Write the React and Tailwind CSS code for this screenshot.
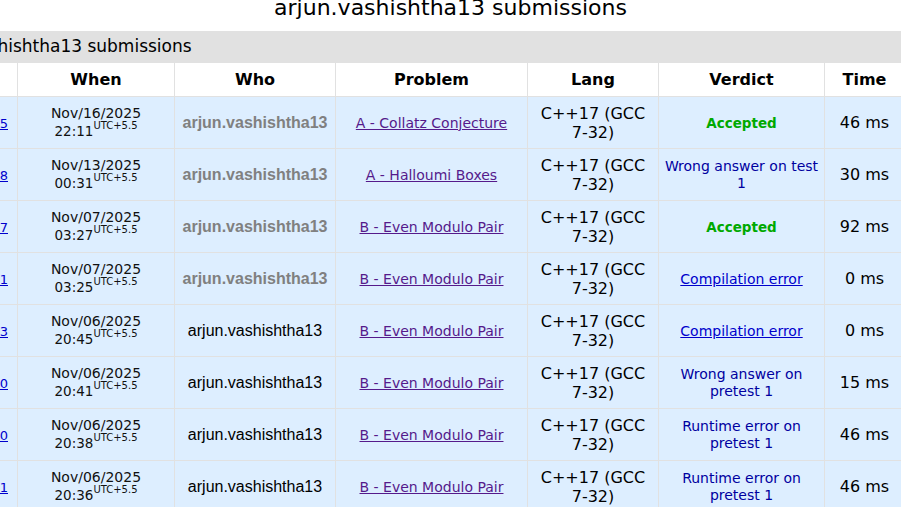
import React from 'react';

const rows = [
  { id: '349812045', date: 'Nov/16/2025', time: '22:11', rated: true, problem: 'A - Collatz Conjecture', verdict: 'ok', vtext: 'Accepted', ms: '46 ms', mem: '100 KB' },
  { id: '349203118', date: 'Nov/13/2025', time: '00:31', rated: true, problem: 'A - Halloumi Boxes', verdict: 'wa', vtext: 'Wrong answer on test 1', ms: '30 ms', mem: '0 KB' },
  { id: '348112507', date: 'Nov/07/2025', time: '03:27', rated: true, problem: 'B - Even Modulo Pair', verdict: 'ok', vtext: 'Accepted', ms: '92 ms', mem: '1100 KB' },
  { id: '348112261', date: 'Nov/07/2025', time: '03:25', rated: true, problem: 'B - Even Modulo Pair', verdict: 'ce', vtext: 'Compilation error', ms: '0 ms', mem: '0 KB' },
  { id: '347990413', date: 'Nov/06/2025', time: '20:45', rated: false, problem: 'B - Even Modulo Pair', verdict: 'ce', vtext: 'Compilation error', ms: '0 ms', mem: '0 KB' },
  { id: '347988210', date: 'Nov/06/2025', time: '20:41', rated: false, problem: 'B - Even Modulo Pair', verdict: 'wa', vtext: 'Wrong answer on pretest 1', ms: '15 ms', mem: '0 KB' },
  { id: '347986830', date: 'Nov/06/2025', time: '20:38', rated: false, problem: 'B - Even Modulo Pair', verdict: 'wa', vtext: 'Runtime error on pretest 1', ms: '46 ms', mem: '100 KB' },
  { id: '347985121', date: 'Nov/06/2025', time: '20:36', rated: false, problem: 'B - Even Modulo Pair', verdict: 'wa', vtext: 'Runtime error on pretest 1', ms: '46 ms', mem: '100 KB' },
];

const th = 'h-[34px] p-0 border border-[#e1e1e1] bg-white text-[16px] font-bold text-black text-center align-middle';
const td = 'h-[52px] py-0 border border-[#e1e1e1] bg-[#ddeeff] text-center align-middle';

function Verdict({ kind, text }) {
  if (kind === 'ok') {
    return <span className="text-[13.5px] font-bold text-[#00a900]">{text}</span>;
  }
  if (kind === 'ce') {
    return <a href="#" className="text-[14px] text-[#0000cc] underline">{text}</a>;
  }
  return <span className="block text-[14px] leading-[17px] text-[#0000a0]">{text}</span>;
}

export default function App() {
  return (
    <div className="w-[901px] h-[507px] overflow-hidden bg-white font-['DejaVu_Sans',Verdana,sans-serif] text-black">
      <div className="h-[31px] text-center text-[22px] leading-[16px]">arjun.vashishtha13 submissions</div>

      <div className="-ml-[100px] w-[1104px]">
        {/* grey caption bar */}
        <div className="h-[31px] bg-[#e1e1e1] pl-[19px] text-[17px] leading-[31px]">
          arjun.vashishtha13 submissions
        </div>

        <table className="table-fixed border-collapse w-[1104px]">
          <colgroup>
            <col className="w-[117px]" />
            <col className="w-[157px]" />
            <col className="w-[161px]" />
            <col className="w-[192px]" />
            <col className="w-[131px]" />
            <col className="w-[166px]" />
            <col className="w-[80px]" />
            <col className="w-[100px]" />
          </colgroup>
          <thead>
            <tr>
              <th className={th}>#</th>
              <th className={th}>When</th>
              <th className={th}>Who</th>
              <th className={th}>Problem</th>
              <th className={th}>Lang</th>
              <th className={th}>Verdict</th>
              <th className={th}>Time</th>
              <th className={th}>Memory</th>
            </tr>
          </thead>
          <tbody>
            {rows.map((r) => (
              <tr key={r.id}>
                <td className={`${td} text-right pr-[9px]`}>
                  <a href="#" className="text-[13px] text-[#0000cc] underline">{r.id}</a>
                </td>
                <td className={`${td} px-1 text-[#111]`}>
                  <span className="block text-[14px] leading-[18px]">{r.date}</span>
                  <span className="block text-[13.5px] leading-[19px]">
                    {r.time}
                    <sup className="text-[10px] -top-[7px]">UTC+5.5</sup>
                  </span>
                </td>
                <td className={`${td} px-1`}>
                  {r.rated ? (
                    <span className="font-['Liberation_Sans',Arial,sans-serif] text-[16px] font-bold text-[#808080]">arjun.vashishtha13</span>
                  ) : (
                    <span className="font-['Liberation_Sans',Arial,sans-serif] text-[16px] text-black">arjun.vashishtha13</span>
                  )}
                </td>
                <td className={`${td} px-1`}>
                  <a href="#" className="text-[14px] text-[#551a8b] underline">{r.problem}</a>
                </td>
                <td className={`${td} text-[16px] leading-[19px] px-2`}>C++17 (GCC 7-32)</td>
                <td className={`${td} px-0`}>
                  <Verdict kind={r.verdict} text={r.vtext} />
                </td>
                <td className={`${td} px-1 text-[16px]`}>{r.ms}</td>
                <td className={`${td} px-1 text-[16px]`}>{r.mem}</td>
              </tr>
            ))}
          </tbody>
        </table>
      </div>
    </div>
  );
}
